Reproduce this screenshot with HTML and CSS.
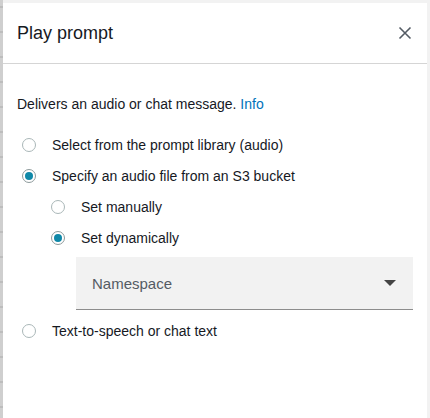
FILE: index.html
```html
<!DOCTYPE html>
<html>
<head>
<meta charset="utf-8">
<link rel="stylesheet" href="styles.css">
</head>
<body>
<div class="frame">
  <div class="rail"></div>
  <div class="panel">
    <div class="header">
      <h1 class="title">Play prompt</h1>
      <svg class="close" width="14" height="14" viewBox="0 0 14 14"><path d="M1.5 1.5 L12.5 12.5 M12.5 1.5 L1.5 12.5" stroke="#545b64" stroke-width="1.6" fill="none"/></svg>
    </div>
    <div class="content">
      <p class="desc">Delivers an audio or chat message. <a class="info">Info</a></p>
      <div class="options">
        <div class="row"><span class="radio"></span><span class="label">Select from the prompt library (audio)</span></div>
        <div class="row"><span class="radio on"></span><span class="label">Specify an audio file from an S3 bucket</span></div>
        <div class="nested">
          <div class="row"><span class="radio"></span><span class="label">Set manually</span></div>
          <div class="row"><span class="radio on"></span><span class="label">Set dynamically</span></div>
          <div class="select"><span class="select-text">Namespace</span><span class="caret"></span></div>
        </div>
        <div class="row last"><span class="radio"></span><span class="label">Text-to-speech or chat text</span></div>
      </div>
    </div>
  </div>
  <div class="gutter"></div>
</div>
</body>
</html>
```
FILE: styles.css
```css
html, body {
  margin: 0;
  padding: 0;
  background: #f2f2f2;
  font-family: "Liberation Sans", Arial, sans-serif;
  color: #16191f;
}
.frame {
  display: flex;
  width: 430px;
  height: 418px;
  overflow: hidden;
}
.rail {
  width: 3px;
  flex: none;
  background-color: #cfcfcf;
  background-image: repeating-linear-gradient(to bottom, transparent 0, transparent 6px, #bdbdbd 6px, #bdbdbd 8px, transparent 8px, transparent 25px);
}
.panel {
  width: 424px;
  flex: none;
  margin-top: 3px;
  background: #ffffff;
  display: flex;
  flex-direction: column;
}
.gutter {
  flex: 1;
  background: #f2f2f2;
}
.header {
  height: 60px;
  border-bottom: 1px solid #d5d5d5;
  display: flex;
  align-items: center;
  justify-content: space-between;
  padding: 0 15px 0 14px;
}
.title {
  margin: 0;
  font-size: 18px;
  font-weight: normal;
  color: #16191f;
}
.close {
  display: block;
}
.content {
  padding: 30px 14px 0 14px;
}
.desc {
  margin: 0;
  font-size: 14px;
  line-height: 20px;
  color: #16191f;
}
.info {
  color: #0073bb;
}
.options {
  margin-top: 15px;
  display: flex;
  flex-direction: column;
}
.row {
  height: 31px;
  display: flex;
  align-items: center;
  padding-left: 5px;
}
.radio {
  width: 14px;
  height: 14px;
  box-sizing: border-box;
  border: 1px solid #aab7b8;
  border-radius: 50%;
  flex: none;
  position: relative;
  background: #fff;
}
.radio.on {
  border-color: #8d9a9b;
}
.radio.on::after {
  content: "";
  position: absolute;
  left: 2px;
  top: 2px;
  width: 8px;
  height: 8px;
  border-radius: 50%;
  background: #0f88a8;
}
.label {
  margin-left: 16px;
  font-size: 14px;
  color: #16191f;
}
.nested {
  padding-left: 29px;
  display: flex;
  flex-direction: column;
}
.select {
  margin: 4px 0 0 30px;
  height: 52px;
  border-bottom: 1px solid #8d8d8d;
  background: #f2f2f2;
  display: flex;
  align-items: center;
  justify-content: space-between;
  padding: 0 17px 0 16px;
}
.select-text {
  font-size: 15px;
  color: #545b64;
}
.caret {
  width: 0;
  height: 0;
  border-left: 6px solid transparent;
  border-right: 6px solid transparent;
  border-top: 6px solid #444;
}
.row.last {
  margin-top: 5px;
}
```
